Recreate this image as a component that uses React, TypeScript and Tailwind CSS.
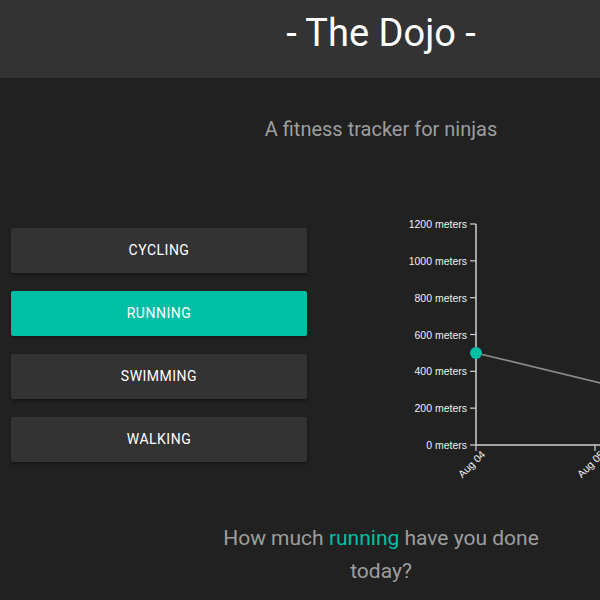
import React from "react";

const activities = ["cycling", "running", "swimming", "walking"];

function Chart() {
  const ox = 158; // axis x local
  const top = 25;
  const bottom = 246;
  const h = bottom - top;
  const ticks = [0, 200, 400, 600, 800, 1000, 1200];
  const yOf = (v: number) => bottom - (v / 1200) * h;
  const y0 = yOf(500);
  return (
    <svg width="444" height="300" className="block" style={{ fontFamily: "'Liberation Sans', Arial, sans-serif" }}>
      <line x1={ox} y1={y0} x2={ox + 240} y2={y0 + 240 * 0.242} stroke="#8a8a8a" strokeWidth="1.6" />
      {/* y axis */}
      <line x1={ox} y1={top} x2={ox} y2={bottom} stroke="#d0d0d0" strokeWidth="1.5" />
      {ticks.map((t) => (
        <g key={t}>
          <line x1={ox - 6} y1={yOf(t)} x2={ox} y2={yOf(t)} stroke="#d0d0d0" strokeWidth="1.2" />
          <text x={ox - 9} y={yOf(t) + 4} textAnchor="end" fontSize="10.5" fill="#f0f0f0">
            {t} meters
          </text>
        </g>
      ))}
      {/* x axis */}
      <line x1={ox} y1={bottom} x2={444} y2={bottom} stroke="#d0d0d0" strokeWidth="1.5" />
      {["Aug 04", "Aug 05", "Aug 06"].map((d, i) => {
        const x = ox + i * 119;
        return (
          <g key={d}>
            <line x1={x} y1={bottom} x2={x} y2={bottom + 6} stroke="#d0d0d0" strokeWidth="1.2" />
            <text
              x={x + 10}
              y={bottom + 10}
              textAnchor="end"
              fontSize="10.5"
              fill="#f0f0f0"
              transform={`rotate(-45 ${x + 10} ${bottom + 10})`}
            >
              {d}
            </text>
          </g>
        );
      })}
      <circle cx={ox} cy={y0} r="6" fill="#00bfa5" />
    </svg>
  );
}

export default function App() {
  return (
    <div className="min-h-[600px] bg-[#212121]" style={{ fontFamily: "Roboto, 'Liberation Sans', sans-serif" }}>
      <div className="w-[762px]">
        <header className="h-[78px] bg-[#333333] flex items-start justify-center">
          <h1 className="text-white text-[38px] leading-none mt-[14px] font-normal">- The Dojo -</h1>
        </header>
        <p className="text-center text-[#9e9e9e] text-[20px] leading-none mt-[41px]">
          A fitness tracker for ninjas
        </p>
        <div className="grid grid-cols-[318px_444px] mt-[60px]">
          <div className="flex flex-col gap-[18px] px-[11px] pt-[29px]">
            {activities.map((a) => (
              <button
                key={a}
                className={`h-[45px] w-full rounded-[2px] text-[14px] uppercase tracking-[0.5px] text-white shadow-[0_2px_3px_rgba(0,0,0,0.35)] ${
                  a === "running" ? "bg-[#00bfa5]" : "bg-[#333333]"
                }`}
              >
                {a}
              </button>
            ))}
          </div>
          <div>
            <Chart />
          </div>
        </div>
        <p className="mx-auto mt-[23px] w-[370px] text-center text-[21px] leading-[33px] text-[#9e9e9e]">
          How much <span className="text-[#00bfa5]">running</span> have you done today?
        </p>
      </div>
    </div>
  );
}
